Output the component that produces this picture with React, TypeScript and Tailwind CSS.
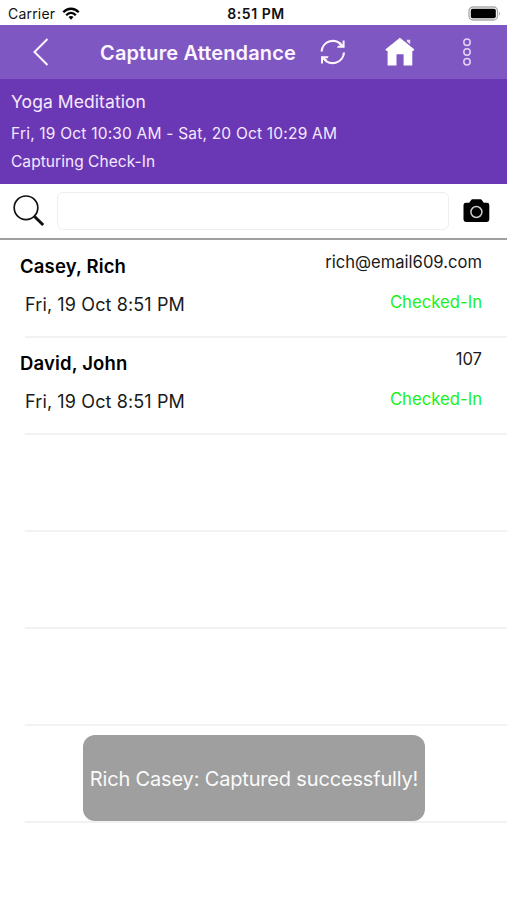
import React from "react";

type Attendee = { name: string; time: string; reference: string; status: string };

const attendees: Attendee[] = [
  { name: "Casey, Rich", time: "Fri, 19 Oct 8:51 PM", reference: "rich@email609.com", status: "Checked-In" },
  { name: "David, John", time: "Fri, 19 Oct 8:51 PM", reference: "107", status: "Checked-In" },
];

function StatusBar() {
  return (
    <div className="flex h-[25px] items-center bg-white text-[#111]">
      <div className="flex flex-1 items-center pt-[3px] pl-2">
        <span className="w-[47px] text-[14px] leading-5 tracking-[0.2px]">Carrier</span>
        <svg className="mb-px ml-[7px] h-[13px] w-[18px]" viewBox="0 0 18 13" fill="none" stroke="#000" strokeWidth="2.3">
          <path d="M1.3 5.2C5.6.6 12.4.6 16.7 5.2" />
          <path d="M4.2 8.2C7 5.2 11 5.2 13.8 8.2" />
          <path d="M6.5 10.1C8 8.7 10 8.7 11.5 10.1L9 12.7Z" fill="#000" stroke="none" />
        </svg>
      </div>
      <span className="pt-[3px] pl-[3px] text-[14px] leading-5 font-semibold tracking-[0.55px]">8:51 PM</span>
      <div className="flex flex-1 justify-end pt-px pr-[6px]">
        <svg className="h-[15px] w-[33px]" viewBox="0 0 33 15">
          <rect x="1" y="1" width="28.5" height="13" rx="4" fill="#fff" stroke="#aaa" strokeWidth="1.3" />
          <rect x="2.8" y="2.8" width="25" height="9.4" rx="1.8" fill="#000" />
          <path d="M31 5.2Q32.6 7.5 31 9.8Z" fill="#999" />
        </svg>
      </div>
    </div>
  );
}

function Header() {
  return (
    <header className="flex h-[54px] items-center bg-[#7e57c2] pl-[31px] text-[#fdf5ff]">
      <svg className="h-[30px] w-5" viewBox="0 0 20 30" fill="none" stroke="currentColor" strokeWidth="2">
        <path d="M16.5 2L3.5 15L16.5 28" />
      </svg>
      <h1 className="ml-[49px] w-[196px] pt-px text-[20px] leading-6 font-semibold tracking-[0.14px] whitespace-nowrap">Capture Attendance</h1>
      <svg className="ml-[23px] h-[28px] w-[28px]" viewBox="0 0 28 28" fill="none" stroke="currentColor" strokeWidth="2.2">
        <path d="M2.6 13.5A11.3 11.3 0 0 1 23.2 7.8" />
        <path d="M25 14.5A11.3 11.3 0 0 1 4.4 20.2" />
        <path d="M25.6 2.6V9.8H18L19 7.8H23.6V2.6Z" fill="currentColor" stroke="none" />
        <path d="M2 25.4V18.2H9.6L8.6 20.2H4V25.4Z" fill="currentColor" stroke="none" />
        <path d="M20.4 5.6L24.6 9M7.2 22.4L3 19" />
      </svg>
      <svg className="ml-[38px] h-[30px] w-[30px]" viewBox="0 0 30 30" fill="#fff">
        <path d="M14.9.7L29.5 12.5 28 14H27.3V28.5H18.6V17.2H11.5V28.5H2.6V14H1.8L.3 12.5Z" />
        <path d="M21.8 2.8H25.2V7.2L21.8 4.4Z" fill="#e9dcf5" />
      </svg>
      <svg className="ml-[47px] h-[30px] w-[10px]" viewBox="0 0 10 30" fill="none" stroke="#e3d2f5" strokeWidth="1.5">
        <circle cx="5" cy="5.2" r="3.2" />
        <circle cx="5" cy="15" r="3.2" />
        <circle cx="5" cy="24.7" r="3.2" />
      </svg>
    </header>
  );
}

function SessionInfo() {
  return (
    <section className="h-[105px] bg-[#6a38b4] pt-[11px] pl-[11px] text-[#f6e8ff]">
      <p className="text-[17.5px] leading-6 tracking-[0.07px]">Yoga Meditation</p>
      <p className="mt-[10px] text-[15.5px] leading-5 tracking-[0.2px]">Fri, 19 Oct 10:30 AM - Sat, 20 Oct 10:29 AM</p>
      <p className="mt-[8px] text-[15.5px] leading-5 tracking-[0.05px]">Capturing Check-In</p>
    </section>
  );
}

function SearchBar() {
  return (
    <div className="flex h-[56px] items-center border-b-2 border-[#a0a0a0] bg-white pl-3">
      <svg className="h-[34px] w-[34px]" viewBox="0 0 34 34" fill="none" stroke="#111">
        <circle cx="14" cy="13.8" r="11.8" strokeWidth="1.7" />
        <path d="M22.5 22.5L31.2 31" strokeWidth="3" />
      </svg>
      <input aria-label="Search" className="ml-[11px] h-[38px] w-[392px] rounded-[6px] border border-[#eee] bg-white outline-none" />
      <svg className="ml-[14px] h-6 w-[27px]" viewBox="0 0 27 24">
        <path d="M3 3.7H6.2L8.2.9Q8.6.3 9.5.3H17.5Q18.4.3 18.8.9L20.8 3.7H24Q26.3 3.7 26.3 6V20.6Q26.3 22.9 24 22.9H3Q.5 22.9.5 20.6V6Q.5 3.7 3 3.7Z" fill="#000" />
        <circle cx="13.4" cy="13" r="5.5" fill="none" stroke="#ccc" strokeWidth="1.5" />
      </svg>
    </div>
  );
}

function AttendeeRow({ attendee }: { attendee?: Attendee }) {
  return (
    <li className="flex h-[97px] flex-col pl-[25px]">
      {attendee && (
        <div className="flex flex-1 justify-between pr-[25px]">
          <div>
            <p className="-ml-[5px] pt-[13px] text-[18.5px] leading-6 font-semibold tracking-[0.16px] text-black">{attendee.name}</p>
            <p className="pt-[15px] text-[18px] leading-6 tracking-[0.12px] text-[#1a1a1a]">{attendee.time}</p>
          </div>
          <div className="text-right">
            <p className="pt-[9px] text-[16.6px] leading-6 text-[#1a1a1a]">{attendee.reference}</p>
            <p className="pt-[16px] text-[16.7px] leading-6 text-[#18f218]">{attendee.status}</p>
          </div>
        </div>
      )}
      <div className="mt-auto h-[2px] bg-[#f2f2f2]" />
    </li>
  );
}

export default function App() {
  return (
    <main className="relative h-[900px] w-[507px] overflow-hidden bg-white font-['Inter','Liberation_Sans',sans-serif]">
      <StatusBar />
      <Header />
      <SessionInfo />
      <SearchBar />
      <ul className="mt-px">
        {attendees.map((attendee) => (
          <AttendeeRow key={attendee.name} attendee={attendee} />
        ))}
        {[0, 1, 2, 3].map((row) => (
          <AttendeeRow key={row} />
        ))}
      </ul>
      <div role="status" className="absolute top-[735px] left-[83px] flex h-[86px] w-[342px] items-center justify-center rounded-[12px] bg-[#9f9f9f] pt-px text-[20px] leading-6 tracking-[-0.17px] whitespace-nowrap text-[#fafafa]">
        Rich Casey: Captured successfully!
      </div>
    </main>
  );
}
